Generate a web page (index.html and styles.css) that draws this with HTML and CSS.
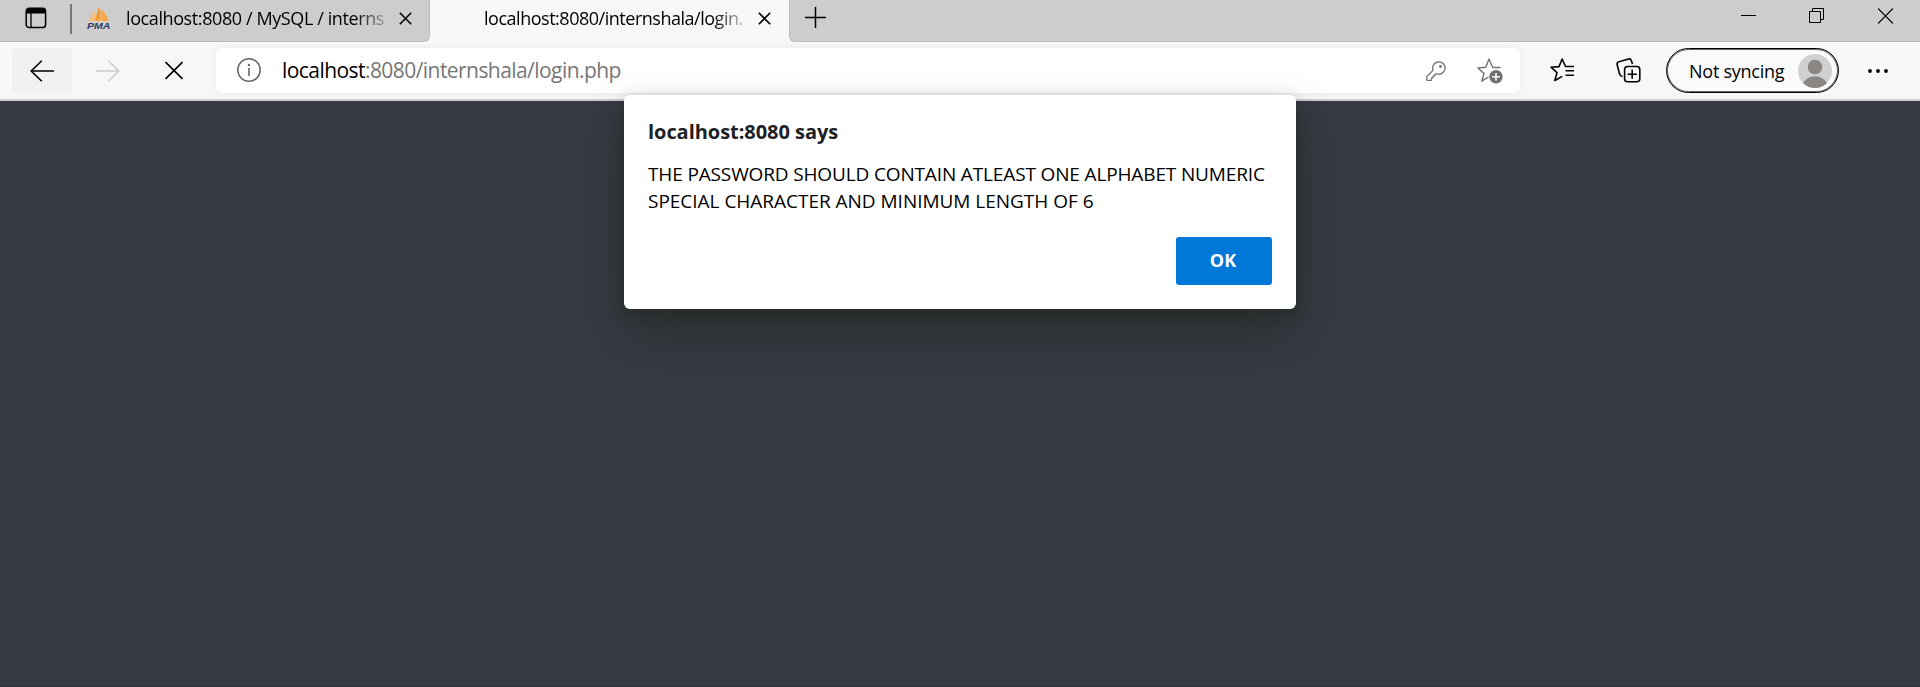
FILE: index.html
```html
<!DOCTYPE html>
<html lang="en">
<head>
<meta charset="utf-8">
<title>localhost:8080/internshala/login.php</title>
<link rel="stylesheet" href="styles.css">
</head>
<body>
<div class="browser">
  <header class="tabstrip">
    <button class="tab-actions" aria-label="Tab actions">
      <svg width="22" height="22" viewBox="0 0 22 22"><rect x="1.2" y="1.2" width="19.4" height="19.4" rx="3.2" fill="none" stroke="#000" stroke-width="1.5"/><path d="M1 6.5V4a3 3 0 0 1 3-3h14a3 3 0 0 1 3 3v2.5z"/><path d="M6 6v14.500" stroke="#000" stroke-width="1.3"/></svg>
    </button>
    <div class="tab tab-idle">
      <svg class="favicon" width="24" height="24" viewBox="0 0 24 24"><path d="M1.500 15 6.500 6l1.500-1v10z" fill="#f6bd80"/><path d="M8 15 11.500 1 13.500 5V15z" fill="#f89c2b"/><path d="M14.300 15V3c3.700 3.500 6 7.500 7.200 12z" fill="#f8a544"/><path d="M2 16q10-2 20 0" fill="none" stroke="#f1cda6"/><text class="pma" x="0" y="22.800" textLength="23.500" lengthAdjust="spacingAndGlyphs">PMA</text></svg>
      <span class="tab-title title-idle">localhost:8080 / MySQL / interns</span>
      <svg class="tab-close" width="13" height="13" viewBox="0 0 13 13"><path d="M.8.800l11.400 11.400M12.200.800.800 12.200" stroke="#000" stroke-width="1.600"/></svg>
    </div>
    <div class="tab tab-active">
      <span class="tab-title title-active">localhost:8080/internshala/login.</span>
      <svg class="tab-close" width="13" height="13" viewBox="0 0 13 13"><path d="M.8.800l11.400 11.400M12.200.800.800 12.200" stroke="#000" stroke-width="1.600"/></svg>
    </div>
    <div class="tab-rest">
      <svg class="new-tab" width="21" height="21" viewBox="0 0 21 21"><path d="M10.500 0v21M0 10.500h21" stroke="#000" stroke-width="1.500"/></svg>
      <div class="window-controls">
        <svg width="15" height="16" viewBox="0 0 15 16"><path d="M0 7.500h15" stroke="#000"/></svg>
        <svg width="15" height="16" viewBox="0 0 15 16" fill="none" stroke="#000"><path d="M.500 3.500h11v11h-11zM3.500 3.500v-3h11v11h-3"/></svg>
        <svg class="window-close" width="15" height="16" viewBox="0 0 15 16"><path d="m0 .500 15 15M15 .500l-15 15" stroke="#000" stroke-width="1.200"/></svg>
      </div>
    </div>
  </header>

  <nav class="toolbar">
    <button class="nav-button nav-back" aria-label="Back"><svg width="24" height="22" viewBox="0 0 24 22" fill="none" stroke="#000" stroke-width="1.600"><path d="M24 11H1.200M11.800.700 1.200 11l10.600 10.300"/></svg></button>
    <button class="nav-button" aria-label="Forward"><svg width="24" height="22" viewBox="0 0 24 22" fill="none" stroke="#ccc" stroke-width="1.600"><path d="M0 11h22.800M12.200.700 22.800 11 12.200 21.300"/></svg></button>
    <button class="nav-button" aria-label="Stop"><svg width="18" height="19" viewBox="0 0 18 19"><path d="m.5 1 17 17M17.500 1l-17 17" stroke="#000" stroke-width="1.700"/></svg></button>
    <div class="address">
      <svg class="info" width="24" height="24" viewBox="0 0 24 24"><circle cx="12" cy="12" r="11.200" fill="none" stroke="#666" stroke-width="1.500"/><path d="M12 10v8" stroke="#666" stroke-width="1.600"/><circle cx="12" cy="7" r="1.200" fill="#666"/></svg>
      <span class="url"><span class="host">localhost</span>:8080/internshala/login.php</span>
      <svg class="key" width="20" height="20" viewBox="0 0 20 20" fill="none" stroke="#757575" stroke-width="1.300" stroke-linejoin="round"><path d="M12.800.800a6.200 6.200 0 1 1-2.200 12H9v2H7v2H5.500v2.500H.800v-3.800l6.300-6.200A6.200 6.200 0 0 1 12.800.800z"/><circle cx="14.500" cy="5.500" r=".8" fill="#757575"/></svg>
      <svg class="star-add" width="26" height="26" viewBox="0 0 26 26" fill="none" stroke="#707070" stroke-width="1.400" stroke-linejoin="round"><path d="M23.500 9.500h-7.800L12 1 8.800 9.300.900 9.900l6.200 5.500L4.700 23.200l6.800-4.200"/><circle cx="19" cy="18.800" r="6.700" fill="#707070" stroke="none"/><path d="M19 15v7.600M15.200 18.800h7.600" stroke="#fff" stroke-width="1.500"/></svg>
    </div>
    <svg class="favorites" width="25" height="24" viewBox="0 0 25 24" fill="none" stroke="#000" stroke-width="1.600" stroke-linejoin="round"><path d="M24 8.500h-8.500L12.200 1 9 8.600 1 9.200l6 5.500-2.200 7.800 7.500-4.100M15.500 12.700H24M15.500 17.200H24"/></svg>
    <svg class="collections" width="25" height="25" viewBox="0 0 25 25" fill="none" stroke="#000" stroke-width="1.600"><path d="m16.500 6-1.200-3.500a2.200 2.200 0 0 0-2.600-1.500L3 3.700A2.500 2.500 0 0 0 1.100 6.500l2.300 9a4 4 0 0 0 3.200 3"/><rect x="8.600" y="8.500" width="15.200" height="15.300" rx="3"/><path d="M16.200 11.500v9.300M11.500 16.200h9.400"/></svg>
    <button class="profile"><span class="profile-name">Not syncing</span><svg width="34" height="34" viewBox="0 0 34 34"><circle cx="17" cy="17" r="17" fill="#d2d0ce"/><circle cx="17" cy="13" r="7.300" fill="#8a8683"/><path d="M5 29a14 14 0 0 1 24 0 17 17 0 0 1-24 0z" fill="#8a8683"/></svg></button>
    <svg class="more" width="20" height="4" viewBox="0 0 20 4"><circle cx="2" cy="2" r="1.900"/><circle cx="10" cy="2" r="1.900"/><circle cx="18" cy="2" r="1.900"/></svg>
  </nav>

  <main class="page"></main>
</div>

<section class="dialog" role="alertdialog">
  <h1 class="dialog-title">localhost:8080 says</h1>
  <p class="dialog-message"><span class="line-one">THE PASSWORD SHOULD CONTAIN ATLEAST ONE ALPHABET NUMERIC</span><br><span class="line-two">SPECIAL CHARACTER AND MINIMUM LENGTH OF 6</span></p>
  <button class="ok">OK</button>
</section>
</body>
</html>
```
FILE: styles.css
```css
* { box-sizing: border-box; }
body { margin: 0; font-family: "Open Sans", "Noto Sans", sans-serif; color: #000; overflow: hidden; }
button { border: 0; padding: 0; background: none; font: inherit; color: inherit; }
svg { display: block; flex: none; }
.browser { height: 687px; display: flex; flex-direction: column; }

.tabstrip { height: 42px; display: flex; background: #f7f7f7; flex: none; }
.tab-actions { width: 72px; display: flex; align-items: flex-start; background: #cdcdcd; border-bottom: 1px solid #bbb; padding: 7px 0 0 25px; position: relative; }
.tab-actions::after { content: ""; position: absolute; right: 0; top: 4px; width: 2px; height: 30px; background: #777; }
.tab { display: flex; align-items: flex-start; }
.tab-idle { width: 358px; background: #cdcdcd; border-bottom: 1px solid #bbb; border-right: 1px solid #bbb; border-bottom-right-radius: 6px; padding-left: 15px; }
.favicon { margin-top: 6px; }
.pma { font: italic bold 9px "Liberation Sans", sans-serif; fill: #34396c; }
.tab-title { width: 260px; font-size: 18px; line-height: 24px; margin-top: 6px; white-space: nowrap; -webkit-mask-image: linear-gradient(to right, #000 88%, rgba(0,0,0,.2)); mask-image: linear-gradient(to right, #000 88%, rgba(0,0,0,.2)); }
.title-idle { margin-left: 15px; letter-spacing: -0.4px; }
.title-active { margin-left: 54px; letter-spacing: -0.48px; }
.tab-close { margin: 12px 0 0 13px; }
.tab-active { width: 359px; }
.tab-active .tab-close { margin-left: 14px; }
.tab-rest { flex: 1; display: flex; justify-content: space-between; background: #cdcdcd; border-bottom: 1px solid #bbb; border-left: 1px solid #bbb; border-bottom-left-radius: 6px; padding-left: 15px; }
.new-tab { margin-top: 7px; }
.window-controls { display: flex; gap: 53px; padding: 8px 27px 0 0; }
.window-close { margin-left: 1px; }

.toolbar { height: 59px; flex: none; display: flex; align-items: flex-start; background: #f7f7f7; border-bottom: 2px solid #ccc; padding: 6px 0 0 12px; }
.nav-button { width: 60px; height: 45px; display: flex; align-items: center; justify-content: center; border-radius: 4px; margin-right: 6px; }
.nav-back { background: #f1f1f1; }
.address { width: 1304px; height: 45px; margin-left: 6px; background: #fff; border-radius: 6px; box-shadow: 0 0 6px rgba(0,0,0,.07); display: flex; align-items: flex-start; }
.info { margin: 10px 0 0 21px; }
.url { width: 1144px; margin-left: 21px; font-size: 21px; line-height: 45px; color: #767676; white-space: nowrap; letter-spacing: -0.56px; }
.host { color: #000; }
.key { margin-top: 13px; }
.star-add { margin: 10px 0 0 31px; }
.favorites { margin: 10px 0 0 30px; }
.collections { margin: 10px 0 0 41px; }
.profile { width: 173px; height: 45px; margin-left: 25px; border: 1px solid #000; box-shadow: inset 0 0 0 1px #666; border-radius: 23px; background: #fafafa; display: flex; align-items: center; padding-left: 22px; }
.profile-name { width: 109px; text-align: left; font-size: 18px; letter-spacing: -0.25px; white-space: nowrap; }
.more { margin: 21px 0 0 29px; }

.page { flex: 1; background: #363a42; border-bottom: 1px solid #303238; }

.dialog { position: absolute; left: 624px; top: 95px; width: 672px; height: 214px; padding: 24px 24px; background: #fff; border-radius: 6px; box-shadow: 0 24px 50px rgba(14,22,8,.3), 0 5px 14px rgba(14,22,8,.25); display: flex; flex-direction: column; }
.dialog-title { margin: 0; font-size: 20px; line-height: 26px; font-weight: 700; color: #202124; letter-spacing: -0.05px; }
.dialog-message { margin: 16px 0 0; font-size: 19px; line-height: 27px; white-space: nowrap; letter-spacing: -0.14px; }
.line-two { letter-spacing: -0.02px; }
.ok { width: 96px; height: 48px; margin: 22px 0 0 auto; padding: 0 2px 2px 0; background: #0078d7; color: #fff; border-radius: 3px; font-size: 18px; font-weight: 700; }
```
